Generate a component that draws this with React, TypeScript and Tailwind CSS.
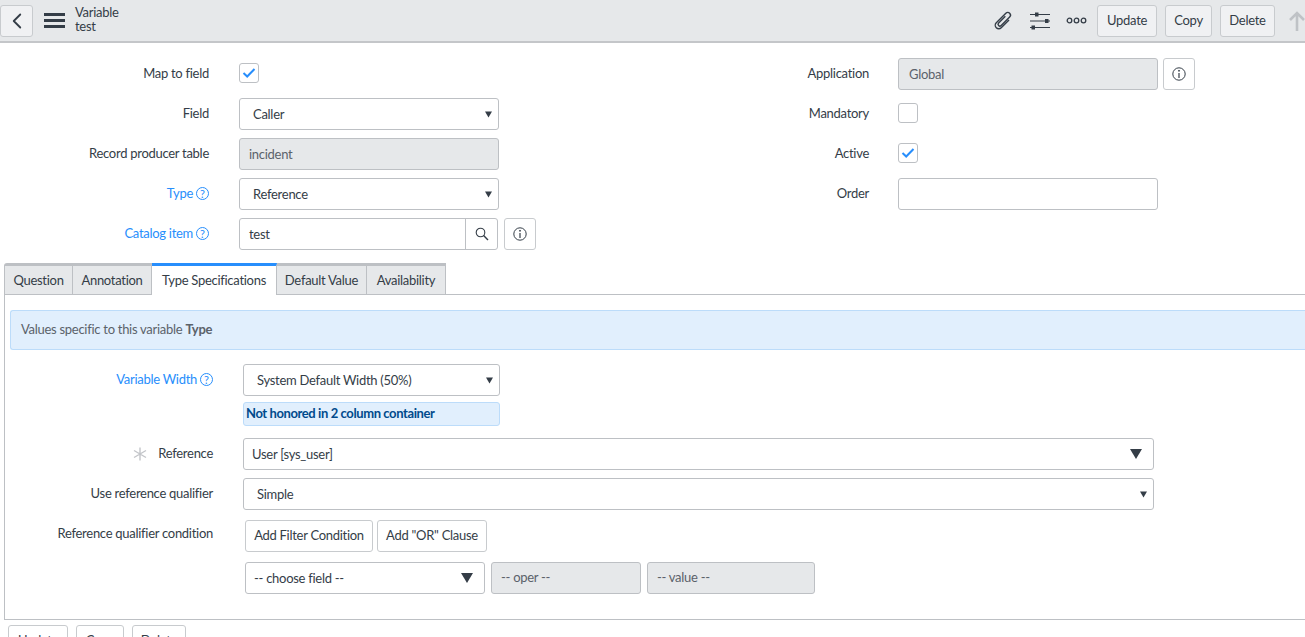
import React from 'react';
import { ChevronLeft } from 'lucide-react';

const font = 'font-["Lato","Liberation_Sans",sans-serif]';

const Check = () => (
    <svg width="14" height="12" viewBox="0 0 14 12" fill="none">
        <path d="M1.5 6 L5.2 9.5 L12.5 2" stroke="#278efc" strokeWidth="2" />
    </svg>
);

const Checkbox = ({ checked }: { checked?: boolean }) => (
    <div className="w-5 h-5 border border-[#bdc0c4] rounded-[3px] bg-white flex items-center justify-center">
        {checked && <Check />}
    </div>
);

const Caret = ({ big }: { big?: boolean }) => (
    <svg width={big ? 12 : 7} height={big ? 10 : 7} viewBox="0 0 12 10" className="shrink-0">
        <path d="M0 0 H12 L6 10 Z" fill="#343d47" />
    </svg>
);

const InfoIcon = () => (
    <svg width="14" height="14" viewBox="0 0 14 14" fill="none" stroke="#343d47">
        <circle cx="7" cy="7" r="6.2" strokeWidth="1" />
        <path d="M7 6 V11" strokeWidth="1.2" />
        <circle cx="7" cy="3.8" r="0.5" fill="#343d47" />
    </svg>
);

const InfoButton = () => (
    <button className="w-8 h-8 border border-[#c8cbce] rounded-[3px] bg-white flex items-center justify-center">
        <InfoIcon />
    </button>
);

const Help = () => (
    <span className="inline-flex w-[13px] h-[13px] ml-[3px] rounded-full border border-[#278efc] items-center justify-center text-[11px] tracking-normal leading-none text-[#278efc]">
        ?
    </span>
);

const Select = ({ value, className, big }: { value: string; className: string; big?: boolean }) => (
    <div className={`h-8 border border-[#bdc0c4] rounded-[3px] bg-white flex items-center justify-between text-[#343d47] ${className}`}>
        <span className="pt-[1px]">{value}</span>
        <Caret big={big} />
    </div>
);

const Label = ({ children, link }: { children: React.ReactNode; link?: boolean }) => (
    <div className={`h-8 flex items-center justify-end pb-[1px] ${link ? 'text-[#278efc]' : 'text-[#343d47]'}`}>
        {children}
    </div>
);

const ToolButton = ({ label, className }: { label: string; className: string }) => (
    <button className={`h-8 border border-[#c8cbce] rounded-[3px] bg-[#f0f1f3] text-[#343d47] ${className}`}>{label}</button>
);

const PaperclipIcon = () => (
    <svg width="24" height="24" viewBox="0 0 24 24" fill="none" stroke="#343d47" strokeWidth="1.4">
        <path transform="rotate(45 12 12)" d="M15.5 7 V18 a3.5 3.5 0 0 1 -7 0 V4.5 a2.7 2.7 0 0 1 5.4 0 V16.5 a1.8 1.8 0 0 1 -3.6 0 V7" />
    </svg>
);

const SearchIcon = () => (
    <svg width="14" height="14" viewBox="0 0 14 14" fill="none" stroke="#343d47" strokeWidth="1.1">
        <circle cx="5.5" cy="5.5" r="4.3" />
        <path d="M8.6 8.6 L13 13" strokeWidth="1.4" />
    </svg>
);

const UpArrow = () => (
    <svg width="16" height="20" viewBox="0 0 16 20" fill="none" stroke="#bfc2c6" strokeWidth="2.6" className="ml-[14px]">
        <path d="M8 20 V2 M1 9 L8 2 L15 9" />
    </svg>
);

const SlidersIcon = () => (
    <svg width="22" height="20" viewBox="0 0 22 20" stroke="#343d47" strokeWidth="1.2" fill="#343d47">
        <path d="M1 3.5 H21 M1 10 H21 M1 16.5 H21" />
        <rect x="6" y="1.5" width="3.5" height="4" stroke="none" />
        <rect x="16" y="8" width="3.5" height="4" stroke="none" />
        <rect x="2.5" y="14.5" width="3.5" height="4" stroke="none" />
    </svg>
);

const Dots = () => (
    <svg width="21" height="7" viewBox="0 0 21 7" fill="none" stroke="#343d47" strokeWidth="1.3">
        <circle cx="3.5" cy="3.5" r="2.3" />
        <circle cx="10.5" cy="3.5" r="2.3" />
        <circle cx="17.5" cy="3.5" r="2.3" />
    </svg>
);

const Asterisk = () => (
    <svg width="14" height="14" viewBox="0 0 14 14" stroke="#c3c5c9" strokeWidth="1.4" className="mr-[11px]">
        <path d="M7 0.5 V13.5 M1 3.5 L13 10.5 M13 3.5 L1 10.5" />
    </svg>
);

const tabs = [
    { name: 'Question', width: 'w-[69px]' },
    { name: 'Annotation', width: 'w-[79px]' },
    { name: 'Type Specifications', width: 'w-[125px]' },
    { name: 'Default Value', width: 'w-[90px]' },
    { name: 'Availability', width: 'w-[79px]' },
];

export default function App() {
    return (
        <div className={`h-screen overflow-hidden bg-white text-[13px] tracking-[-0.28px] ${font}`}>
            <header className="h-[43px] bg-[#e6e8ea] border-b-2 border-[#c4c6c9] flex items-center">
                <button className="ml-0 w-[33px] h-8 border border-[#c8cbce] rounded-[3px] bg-[#f0f1f3] flex items-center justify-center">
                    <ChevronLeft size={26} color="#343d47" strokeWidth={1.7} />
                </button>
                <div className="ml-[11px] w-[21px] flex flex-col gap-[3px]">
                    <div className="h-[3px] bg-[#343d47]" />
                    <div className="h-[3px] bg-[#343d47]" />
                    <div className="h-[3px] bg-[#343d47]" />
                </div>
                <div className="ml-[10px] leading-[14px] text-[#343d47] -mt-[4px]">
                    <div>Variable</div>
                    <div>test</div>
                </div>
                <div className="ml-auto flex items-center">
                    <PaperclipIcon />
                    <div className="ml-[14px]"><SlidersIcon /></div>
                    <div className="ml-[15px]"><Dots /></div>
                    <ToolButton label="Update" className="ml-[10px] w-[60px]" />
                    <ToolButton label="Copy" className="ml-2 w-[47px]" />
                    <ToolButton label="Delete" className="ml-2 w-[55px]" />
                    <UpArrow />
                </div>
            </header>

            <div className="pt-[15px] flex">
                <div className="w-[659px] grid grid-cols-[209px_1fr] gap-x-[30px] gap-y-2 content-start">
                    <Label>Map to field</Label>
                    <div className="h-8 flex items-center pb-[2px]"><Checkbox checked /></div>
                    <Label>Field</Label>
                    <Select value="Caller" className="w-[260px] pl-[13px] pr-[6px]" />
                    <Label>Record producer table</Label>
                    <div className="w-[260px] h-8 border border-[#bdc0c4] rounded-[3px] bg-[#e6e8ea] flex items-center pl-[9px] pt-[1px] text-[#5b626a]">incident</div>
                    <Label link>Type<Help /></Label>
                    <Select value="Reference" className="w-[260px] pl-[13px] pr-[6px]" />
                    <Label link>Catalog item<Help /></Label>
                    <div className="flex gap-[6px]">
                        <div className="w-[259px] h-8 border border-[#bdc0c4] rounded-[3px] flex items-center text-[#343d47]">
                            <span className="flex-1 pl-[9px] pt-[1px]">test</span>
                            <div className="w-[32px] h-full border-l border-[#bdc0c4] flex items-center justify-center">
                                <SearchIcon />
                            </div>
                        </div>
                        <InfoButton />
                    </div>
                </div>
                <div className="flex-1 grid grid-cols-[210px_1fr] gap-x-[29px] gap-y-2 content-start">
                    <Label>Application</Label>
                    <div className="flex gap-[5px]">
                        <div className="w-[260px] h-8 border border-[#bdc0c4] rounded-[3px] bg-[#e6e8ea] flex items-center pl-[10px] pt-[1px] text-[#5b626a]">Global</div>
                        <InfoButton />
                    </div>
                    <Label>Mandatory</Label>
                    <div className="h-8 flex items-center pb-[2px]"><Checkbox /></div>
                    <Label>Active</Label>
                    <div className="h-8 flex items-center pb-[2px]"><Checkbox checked /></div>
                    <Label>Order</Label>
                    <div className="w-[260px] h-8 border border-[#bdc0c4] rounded-[3px]" />
                </div>
            </div>

            <div className="mt-[13px] ml-1 flex h-8 relative z-10">
                {tabs.map((t, i) => (
                    <div
                        key={t.name}
                        className={`${t.width} justify-center flex items-center border-t-[3px] border-r border-[#bdc0c4] text-[#343d47] ${i === 0 ? 'border-l rounded-tl-[3px]' : ''} ${i === 2 ? 'bg-white border-t-[#278efc] h-[32px]' : 'bg-[#e6e8ea] border-b pt-[1px] h-[32px]'}`}
                    >
                        {t.name}
                    </div>
                ))}
            </div>
            <div className="ml-1 -mt-[1px] h-[326px] border border-r-0 border-[#bdc0c4] pl-[5px] pt-[15px]">
                <div className="h-10 bg-[#e1effd] border border-r-0 border-[#bcdcfa] rounded-l-[3px] flex items-center pl-[10px] text-[#5b626a]">
                    Values specific to this variable&nbsp;<b className="font-bold">Type</b>
                </div>
                <div className="mt-[14px] grid grid-cols-[203px_1fr] gap-x-[30px] content-start">
                    <Label link>Variable Width<Help /></Label>
                    <Select value="System Default Width (50%)" className="w-[257px] pl-[13px] pr-[6px]" />
                    <div />
                    <div className="mt-[6px] w-[257px] h-6 bg-[#e1effd] border border-[#bcdcfa] rounded-[3px] flex items-center pl-[2px] text-[#004a8c] font-bold tracking-[-0.4px]">
                        Not honored in 2 column container
                    </div>
                    <div className="mt-3"><Label><Asterisk />Reference</Label></div>
                    <Select value="User [sys_user]" className="mt-3 w-[911px] pl-2 pr-[11px]" big />
                    <div className="mt-2"><Label>Use reference qualifier</Label></div>
                    <Select value="Simple" className="mt-2 w-[911px] pl-[13px] pr-[6px]" />
                    <div className="mt-2"><Label>Reference qualifier condition</Label></div>
                    <div className="mt-[10px] ml-[2px] flex gap-1">
                        <button className="w-[128px] h-8 border border-[#c8cbce] rounded-[3px] text-[#343d47]">Add Filter Condition</button>
                        <button className="w-[110px] h-8 border border-[#c8cbce] rounded-[3px] text-[#343d47]">Add "OR" Clause</button>
                    </div>
                    <div />
                    <div className="mt-[10px] ml-[2px] flex gap-[6px]">
                        <Select value="-- choose field --" className="w-[240px] pl-2 pr-[11px]" big />
                        <div className="w-[150px] h-8 border border-[#bdc0c4] rounded-[3px] bg-[#e6e8ea] flex items-center pl-[9px] text-[#5b626a]">-- oper --</div>
                        <div className="w-[168px] h-8 border border-[#bdc0c4] rounded-[3px] bg-[#e6e8ea] flex items-center pl-[9px] text-[#5b626a]">-- value --</div>
                    </div>
                </div>
            </div>
            <div className="mt-[5px] ml-2 flex gap-2">
                <ToolButton label="Update" className="w-[60px] !bg-white" />
                <ToolButton label="Copy" className="w-[48px] !bg-white" />
                <ToolButton label="Delete" className="w-[54px] !bg-white" />
            </div>
        </div>
    );
}
